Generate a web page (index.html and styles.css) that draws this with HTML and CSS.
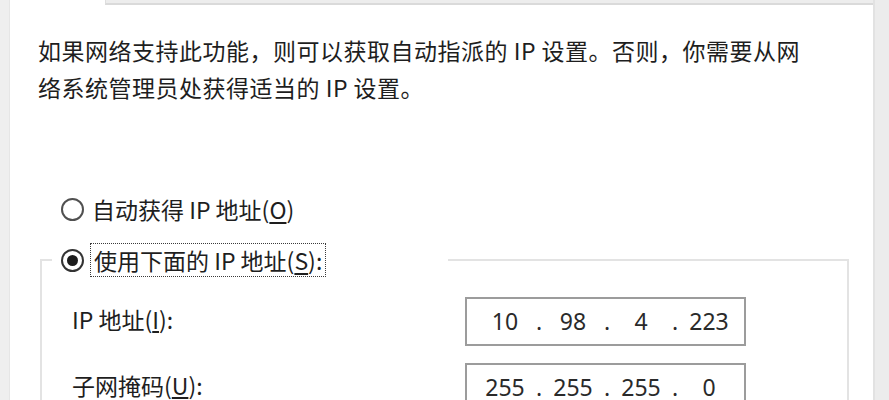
FILE: index.html
```html
<!DOCTYPE html>
<html lang="zh-CN">
<head>
<meta charset="utf-8">
<title>IPv4 属性</title>
<link rel="stylesheet" href="styles.css">
</head>
<body>
<div class="gutter"></div>
<div class="panel">
  <div class="tabs">
    <div class="tab-active"></div>
    <div class="tab-strip"></div>
  </div>
  <p class="intro">如果网络支持此功能，则可以获取自动指派的 IP 设置。否则，你需要从网<br>络系统管理员处获得适当的 IP 设置。</p>
  <div class="radio-row">
    <span class="radio"></span>
    <span class="label">自动获得 IP 地址(<u>O</u>)</span>
  </div>
  <fieldset class="group">
    <legend class="legend">
      <span class="radio checked"></span>
      <span class="label focus">使用下面的 IP 地址(<u>S</u>):</span>
    </legend>
    <div class="field-row">
      <span class="field-label">IP 地址(<u>I</u>):</span>
      <div class="ipbox">
        <span class="octet">10</span><span class="dot">.</span>
        <span class="octet">98</span><span class="dot">.</span>
        <span class="octet">4</span><span class="dot">.</span>
        <span class="octet">223</span>
      </div>
    </div>
    <div class="field-row">
      <span class="field-label">子网掩码(<u>U</u>):</span>
      <div class="ipbox">
        <span class="octet">255</span><span class="dot">.</span>
        <span class="octet">255</span><span class="dot">.</span>
        <span class="octet">255</span><span class="dot">.</span>
        <span class="octet">0</span>
      </div>
    </div>
  </fieldset>
</div>
<div class="gutter-right"></div>
</body>
</html>
```
FILE: styles.css
```css
html, body {
  margin: 0;
  padding: 0;
}
body {
  width: 889px;
  height: 400px;
  overflow: hidden;
  display: flex;
  background: #efefef;
  font-family: "Noto Sans CJK SC", "Noto Sans", sans-serif;
  color: #1e1e1e;
}
.gutter {
  width: 10px;
  flex: none;
  background: #efefef;
  border-right: 1px solid #e6e6e6;
  box-sizing: border-box;
}
.gutter-right {
  flex: 1;
  background: #ececec;
}
.panel {
  width: 865px;
  flex: none;
  height: 400px;
  overflow: hidden;
  background: #ffffff;
  border-right: 2px solid #e2e2e2;
  box-sizing: border-box;
  display: flex;
  flex-direction: column;
}
.tabs {
  display: flex;
  height: 5px;
  flex: none;
}
.tab-active {
  width: 95px;
  background: #ffffff;
}
.tab-strip {
  flex: 1;
  background: #ededed;
  border-bottom: 2px solid #dadada;
  border-left: 1px solid #dedede;
}
.intro {
  margin: 27px 0 0 28px;
  font-size: 23px;
  line-height: 37px;
  letter-spacing: 0.5px;
  white-space: nowrap;
  flex: none;
}
.radio-row {
  margin: 85px 0 0 51px;
  height: 36px;
  flex: none;
  display: flex;
  align-items: center;
  gap: 8px;
}
.label {
  font-size: 23px;
  line-height: 30px;
  white-space: nowrap;
}
.label u {
  text-underline-offset: 3px;
  text-decoration-thickness: 1.5px;
}
.radio {
  width: 23px;
  height: 23px;
  flex: none;
  box-sizing: border-box;
  border: 2px solid #505050;
  border-radius: 50%;
  background: #fff;
  display: flex;
  align-items: center;
  justify-content: center;
}
.radio.checked {
  border-color: #333;
}
.radio.checked::after {
  content: "";
  width: 11px;
  height: 11px;
  border-radius: 50%;
  background: #1c1c1c;
}
.group {
  margin: 15px 0 0 30px;
  width: 809px;
  flex: none;
  box-sizing: border-box;
  border: 2px solid #e3e3e3;
  padding: 19px 0 40px 10px;
  min-width: 0;
}
.legend {
  width: 396px;
  box-sizing: border-box;
  height: 36px;
  padding: 0 0 0 9px;
  display: flex;
  align-items: center;
  gap: 6px;
}
.focus {
  border: 1.5px dotted #3a3a3a;
  padding: 1px 3px;
  height: 34px;
  box-sizing: border-box;
  display: flex;
  align-items: center;
}
.field-row {
  margin-left: 20px;
  height: 49px;
  margin-bottom: 17px;
  display: flex;
  align-items: center;
}
.field-label {
  width: 393px;
  flex: none;
  font-size: 23px;
  line-height: 1;
  padding-bottom: 4px;
  white-space: nowrap;
}
.field-label u {
  text-underline-offset: 2px;
  text-decoration-thickness: 1.5px;
}
.ipbox {
  width: 281px;
  height: 49px;
  box-sizing: border-box;
  border: 2px solid #9c9c9c;
  padding-left: 10px;
  display: flex;
  align-items: center;
  font-family: "Noto Sans", "Open Sans", sans-serif;
  font-size: 23px;
  line-height: 1;
  color: #2a2a2a;
}
.octet {
  width: 56px;
  text-align: center;
}
.dot {
  width: 12px;
  text-align: center;
}
```
